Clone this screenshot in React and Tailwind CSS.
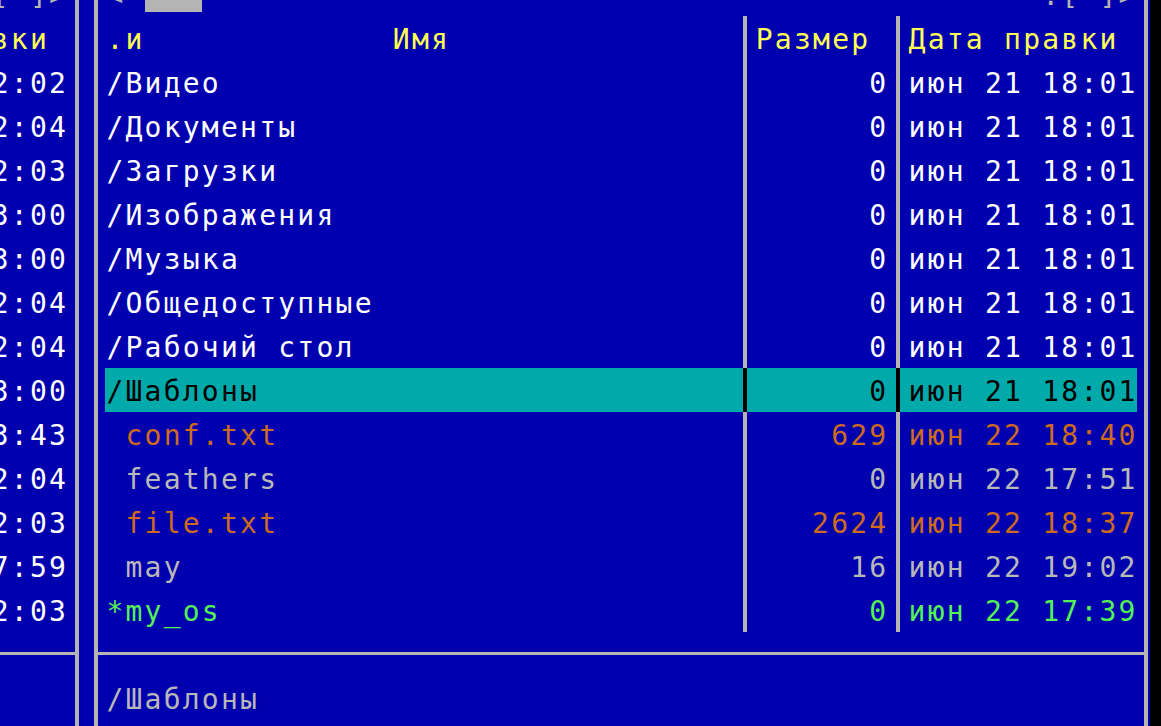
import React from "react";

const rows = [
  { t: "2:02", name: "/Видео", size: "0", date: "июн 21 18:01", c: "text-white" },
  { t: "2:04", name: "/Документы", size: "0", date: "июн 21 18:01", c: "text-white" },
  { t: "2:03", name: "/Загрузки", size: "0", date: "июн 21 18:01", c: "text-white" },
  { t: "3:00", name: "/Изображения", size: "0", date: "июн 21 18:01", c: "text-white" },
  { t: "3:00", name: "/Музыка", size: "0", date: "июн 21 18:01", c: "text-white" },
  { t: "2:04", name: "/Общедоступные", size: "0", date: "июн 21 18:01", c: "text-white" },
  { t: "2:04", name: "/Рабочий стол", size: "0", date: "июн 21 18:01", c: "text-white" },
  { t: "3:00", name: "/Шаблоны", size: "0", date: "июн 21 18:01", c: "text-black", sel: true },
  { t: "3:43", name: " conf.txt", size: "629", date: "июн 22 18:40", c: "text-[#cd6a1e]" },
  { t: "2:04", name: " feathers", size: "0", date: "июн 22 17:51", c: "text-[#b8b8b8]" },
  { t: "2:03", name: " file.txt", size: "2624", date: "июн 22 18:37", c: "text-[#cd6a1e]" },
  { t: "7:59", name: " may", size: "16", date: "июн 22 19:02", c: "text-[#b8b8b8]" },
  { t: "2:03", name: "*my_os", size: "0", date: "июн 22 17:39", c: "text-[#55f055]" },
];

const Divider = ({ dark }) => (
  <div className="w-[19.1px] h-full flex justify-center shrink-0">
    <div className={dark ? "w-[4px] h-full bg-black" : "w-[4px] h-full bg-[#b4b4b4]"} />
  </div>
);

// horizontal frame line in the middle of a text row
const Sep = () => (
  <div className="h-[44px] pt-[20px]">
    <div className="h-[3px] bg-[#b4b4b4]" />
  </div>
);

const LeftPanel = () => (
  <div className="w-[87.95px] shrink-0 border-r-4 border-[#b4b4b4] whitespace-pre">
    <div className="h-[44px] leading-[48px] pl-[1px] text-[#b4b4b4]">[^]&gt;</div>
    <div className="h-[44px] leading-[48px] pl-[1px] text-[#ffff55]">вки</div>
    {rows.map((r, i) => (
      <div key={i} className="h-[44px] leading-[48px] pl-[1px] text-white">{r.t}</div>
    ))}
    <Sep />
    <div className="h-[44px]" />
    <div className="h-[44px]" />
  </div>
);

const Cols = ({ name, size, date, color, sel, header }) => (
  <div className={`flex w-[1031.4px] h-[44px] leading-[48px] whitespace-pre ${sel ? "bg-[#00aaaa]" : ""}`}>
    <div className={`w-[630.3px] shrink-0 pl-[1px] overflow-hidden ${color}`}>{name}</div>
    <Divider dark={sel} />
    <div className={`w-[133.7px] shrink-0 overflow-hidden ${header ? "text-left pl-[1px]" : "text-right"} ${color}`}>{size}</div>
    <Divider dark={sel} />
    <div className={`w-[229.2px] shrink-0 pl-[1px] overflow-hidden ${color}`}>{date}</div>
  </div>
);

const RightPanel = () => (
  <div className="w-[1054.2px] shrink-0 border-x-4 border-[#b4b4b4]">
    <div className="pl-[8.6px] h-[44px] leading-[48px] whitespace-pre text-[#b4b4b4]">
      {"< "}
      <span className="bg-[#b4b4b4] text-black">{" ~ "}</span>
      {" ".repeat(44)}
      {".[^]>"}
    </div>
    <div className="pl-[7.6px]">
      <Cols name={".и             Имя"} size="Размер" date="Дата правки" color="text-[#ffff55]" header />
      {rows.map((r, i) => (
        <Cols key={i} name={r.name} size={r.size} date={r.date} color={r.c} sel={r.sel} />
      ))}
    </div>
    <Sep />
    <div className="pl-[8.6px] h-[44px] leading-[48px] whitespace-pre text-[#b8b8b8]">/Шаблоны</div>
    <div className="h-[44px]" />
  </div>
);

export default function App() {
  return (
    <div className="w-[1161px] h-[726px] bg-black overflow-hidden">
      <div className="w-[1150px] h-[726px] bg-[#0000ae] overflow-hidden font-['DejaVu_Sans_Mono',monospace] text-[28px] tracking-[2.24px]">
        <div className="flex -ml-[9.25px] -mt-[28px]">
          <LeftPanel />
          <div className="w-[15.1px] shrink-0" />
          <RightPanel />
        </div>
      </div>
    </div>
  );
}
